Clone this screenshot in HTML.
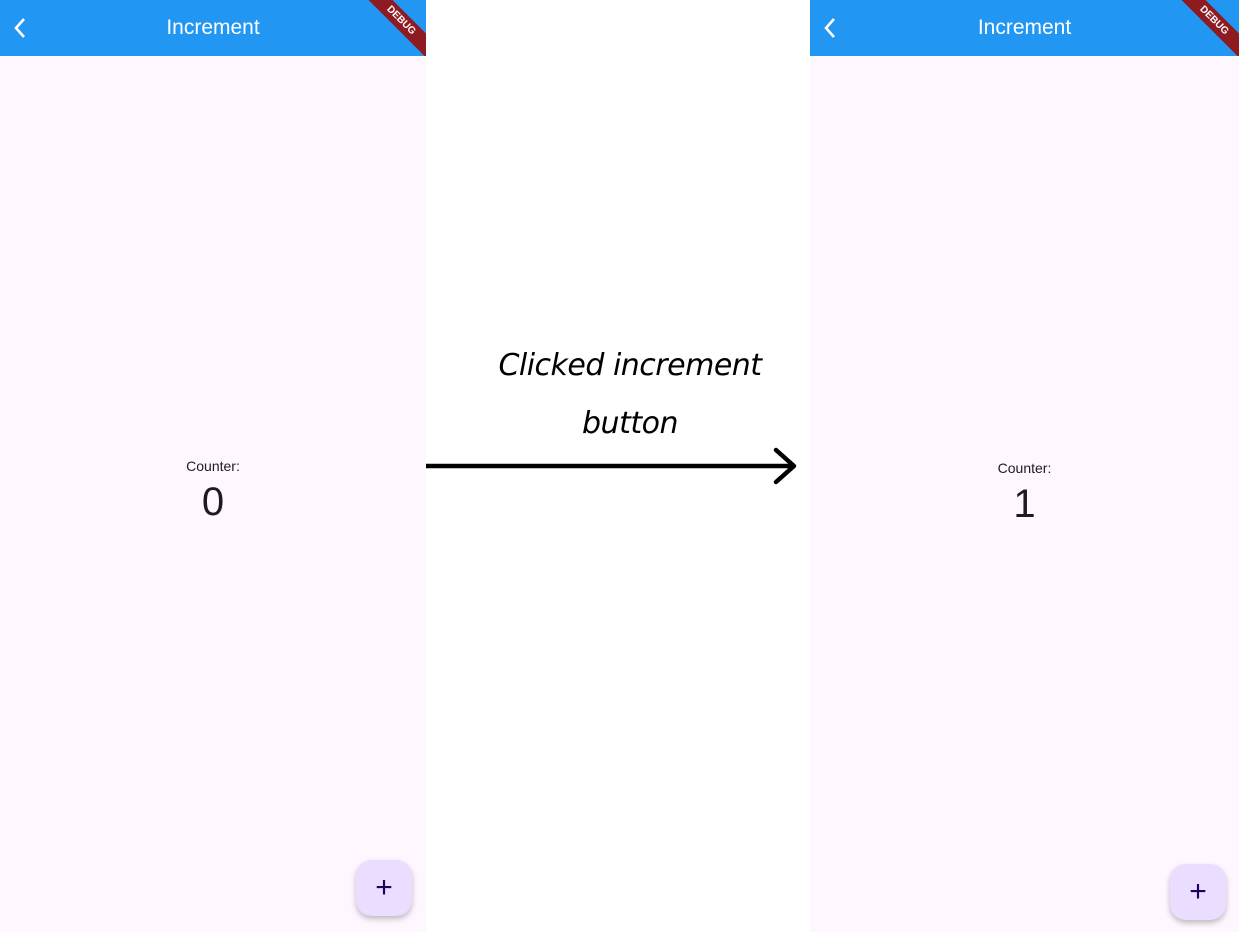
<!DOCTYPE html>
<html><head><style>
body{margin:0;width:1239px;height:932px;background:#fff;position:relative;overflow:hidden;font-family:"Liberation Sans",sans-serif}
.p{position:absolute;top:0;height:932px;background:#FEF7FF;overflow:hidden}
.bar{position:absolute;left:0;top:0;right:0;height:56px;background:#2196F3;overflow:hidden}
.t{position:absolute;top:16px;left:0;right:0;text-align:center;color:#fff;font-size:21px}
.rib{position:absolute;width:120px;height:17px;background:#8E1B22;color:#fff;font-size:10px;font-weight:bold;text-align:center;line-height:17px;transform:rotate(45deg);right:-35px;top:12px}
.c{position:absolute;left:0;right:0;text-align:center;color:#1d1b20}
.fab{position:absolute;width:56px;height:56px;border-radius:16px;background:#EADDFF;box-shadow:0 3px 6px rgba(0,0,0,.25);color:#21005D;font-size:30px;text-align:center;line-height:56px}
</style></head><body>
<div class="p" style="left:0;width:426px">
<div class="bar"><svg style="position:absolute;left:12px;top:16px" width="16" height="24"><path d="M12 3L4 12L12 21" stroke="#fff" stroke-width="2.6" fill="none"/></svg><div class="t">Increment</div><div class="rib">DEBUG</div></div>
<div class="c" style="top:458px;font-size:14px">Counter:</div>
<div class="c" style="top:480px;font-size:40px">0</div>
<div class="fab" style="left:356px;top:860px">+</div>
</div>
<div class="p" style="left:810px;width:429px">
<div class="bar"><svg style="position:absolute;left:12px;top:16px" width="16" height="24"><path d="M12 3L4 12L12 21" stroke="#fff" stroke-width="2.6" fill="none"/></svg><div class="t">Increment</div><div class="rib">DEBUG</div></div>
<div class="c" style="top:460px;font-size:14px">Counter:</div>
<div class="c" style="top:482px;font-size:40px">1</div>
<div class="fab" style="left:360px;top:864px">+</div>
</div>
<div style="position:absolute;left:440px;width:380px;top:337px;text-align:center;font-family:'DejaVu Sans',cursive;font-style:italic;font-size:30px;line-height:58px;color:#000;letter-spacing:-0.5px">Clicked increment<br>button</div>
<svg style="position:absolute;left:426px;top:445px" width="384" height="42"><path d="M0 21H366M350 5L368 21L350 37" stroke="#000" stroke-width="4.5" fill="none" stroke-linecap="round" stroke-linejoin="round"/></svg>
</body></html>
